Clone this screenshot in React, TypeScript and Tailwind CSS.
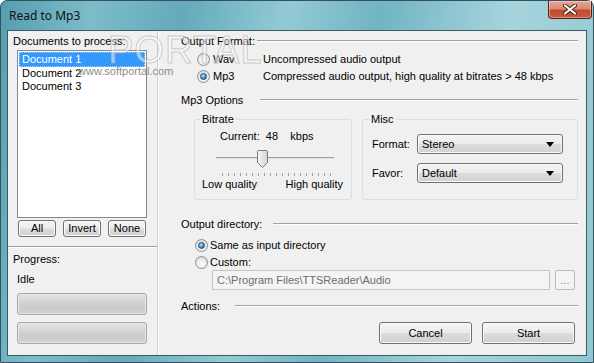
import React from "react";

const btn =
  "flex items-center justify-center rounded-[3px] border border-[#707070] bg-[linear-gradient(#f4f4f4_0%,#ececec_48%,#dcdcdc_52%,#cfcfcf_100%)] shadow-[inset_0_0_0_1px_#fbfbfb] text-[11px] text-black";

const Radio = ({ checked }: { checked?: boolean }) => (
  <span className="flex h-[13px] w-[13px] shrink-0 items-center justify-center rounded-full border border-[#8e8f8f] bg-[radial-gradient(circle_at_50%_65%,#ffffff_0%,#e8e8e8_55%,#cdcdcd_100%)]">
    {checked && (
      <span className="h-[7px] w-[7px] rounded-full border border-[#1d4f7c] bg-[radial-gradient(circle_at_40%_35%,#b8e6ff_0%,#3d8fd0_55%,#15497a_100%)]" />
    )}
  </span>
);

const Header = ({ label, w }: { label: string; w: string }) => (
  <div className="flex h-[14px] items-center">
    <span className={`${w} shrink-0`}>{label}</span>
    <div className="h-[2px] flex-1 border-t border-b border-t-[#a0a0a0] border-b-white" />
  </div>
);

const Select = ({ value }: { value: string }) => (
  <div className="flex h-[20px] w-[146px] items-center justify-between rounded-[3px] border border-[#707070] bg-[linear-gradient(#f4f4f4_0%,#ececec_48%,#dcdcdc_52%,#d2d2d2_100%)] pl-[4px] pr-[8px] shadow-[inset_0_0_0_1px_#fbfbfb]">
    <span>{value}</span>
    <svg width="8" height="5" viewBox="0 0 8 5">
      <path d="M0 0h8L4 5z" fill="#000" />
    </svg>
  </div>
);

const ProgressBar = () => (
  <div className="h-[22px] w-[130px] rounded-[3px] border border-[#a8a8a8] bg-[linear-gradient(#e4e4e4_0%,#d6d6d6_35%,#cacaca_65%,#d2d2d2_100%)] shadow-[inset_0_0_0_1px_#e6e6e6]" />
);

export default function App() {
  const ticks = Array.from({ length: 19 });
  return (
    <div className="relative h-[363px] w-[594px] overflow-hidden font-['Liberation_Sans',sans-serif] text-[11px] text-black">
      <div className="flex h-full w-full flex-col rounded-t-[7px] border border-[#33525c] bg-[linear-gradient(100deg,#559daf_0%,#7dbcc9_14%,#64aabb_28%,#93cad5_44%,#71b4c2_58%,#a6d4dd_78%,#90c6d1_100%)] px-[6px] pb-[6px]">
        {/* title bar */}
        <div className="flex h-[29px] items-center justify-between">
          <span className="pl-[2px] font-['Noto_Sans',sans-serif] text-[12px] text-[#111]">Read to Mp3</span>
          <div className="-mr-[5px] -mt-[11px] flex h-[18px] w-[44px] items-center justify-center rounded-b-[4px] border border-t-0 border-[#5a2018] bg-[linear-gradient(#e7a796_0%,#d88a74_45%,#c14a2e_55%,#c85a3c_100%)] shadow-[inset_0_0_0_1px_rgba(255,255,255,0.35)]">
            <svg width="14" height="11" viewBox="0 0 14 11">
              <path d="M2 1.5l10 8M12 1.5l-10 8" stroke="#4a1d14" strokeWidth="4" strokeLinecap="round" />
              <path d="M2 1.5l10 8M12 1.5l-10 8" stroke="#ffffff" strokeWidth="2.2" strokeLinecap="round" />
            </svg>
          </div>
        </div>

        {/* client */}
        <div className="flex flex-1 border border-[#3d5a63] bg-[#f0f0f0]">
          {/* left panel */}
          <div className="flex w-[150px] shrink-0 flex-col border-r border-r-[#cfcfcf] shadow-[1px_0_0_#ffffff]">
            <div className="px-[5px] pt-[4px] leading-[13px]">Documents to process:</div>
            <div className="ml-[9px] mt-[2px] h-[168px] w-[130px] border border-[#828790] bg-white p-[1px] leading-[13px]">
              <div className="border border-dotted border-[#a8cdf3] bg-[#3399ff] pl-[2px] text-white">Document 1</div>
              <div className="pl-[3px]">Document 2</div>
              <div className="pl-[3px]">Document 3</div>
            </div>
            <div className="ml-[10px] mt-[2px] flex gap-[7px]">
              <div className={`${btn} h-[17px] w-[38px]`}>All</div>
              <div className={`${btn} h-[17px] w-[38px]`}>Invert</div>
              <div className={`${btn} h-[17px] w-[38px]`}>None</div>
            </div>
            <div className="mt-[9px] h-[2px] border-t border-b border-t-[#a0a0a0] border-b-white" />
            <div className="px-[5px] pt-[5px] leading-[13px]">Progress:</div>
            <div className="pl-[9px] pt-[7px] leading-[13px]">Idle</div>
            <div className="ml-[9px] mt-[7px] flex flex-col gap-[7px]">
              <ProgressBar />
              <ProgressBar />
            </div>
          </div>

          {/* right panel */}
          <div className="flex flex-1 flex-col pl-[23px] pr-[8px] pt-[3px]">
            <Header label="Output Format:" w="w-[76px]" />
            <div className="mt-[3px] flex h-[17px] items-center">
              <span className="ml-[16px] mr-[3px]"><Radio /></span>
              <span className="w-[50px]">Wav</span>
              <span>Uncompressed audio output</span>
            </div>
            <div className="flex h-[17px] items-center">
              <span className="ml-[16px] mr-[3px]"><Radio checked /></span>
              <span className="w-[50px]">Mp3</span>
              <span>Compressed audio output, high quality at bitrates &gt; 48 kbps</span>
            </div>
            <div className="mt-[8px]">
              <Header label="Mp3 Options" w="w-[79px]" />
            </div>
            <div className="ml-[13px] mt-[12px] flex gap-[10px]">
              {/* Bitrate */}
              <div className="relative h-[81px] w-[158px] rounded-[3px] border border-[#d5dfe5]">
                <span className="absolute -top-[7px] left-[5px] bg-[#f0f0f0] px-[2px] leading-[13px]">Bitrate</span>
                <div className="ml-[25px] mt-[9px] h-[14px] leading-[14px] whitespace-pre">Current:  48    kbps</div>
                <div className="relative ml-[21px] mt-[7px] h-[20px] w-[118px]">
                  <div className="absolute left-0 right-0 top-[7px] h-[2px] border-t border-b border-t-[#a0a0a0] border-b-[#e3e3e3]" />
                  <svg className="absolute left-[41px] top-0" width="11" height="18" viewBox="0 0 11 18">
                    <defs>
                      <linearGradient id="th" x1="0" x2="1" y1="0" y2="0">
                        <stop offset="0" stopColor="#f6f6f6" />
                        <stop offset="1" stopColor="#d4d4d4" />
                      </linearGradient>
                    </defs>
                    <path d="M1.5 0.5h8a1 1 0 0 1 1 1v11l-5 5-5-5v-11a1 1 0 0 1 1-1z" fill="url(#th)" stroke="#7a7a7a" />
                  </svg>
                </div>
                <div className="ml-[27px] mt-[3px] flex h-[3px] gap-[5px]">
                  {ticks.map((_, i) => (
                    <div key={i} className="h-[3px] w-[1px] bg-[#a0a0a0]" />
                  ))}
                </div>
                <div className="ml-[7px] mr-[8px] mt-[2px] flex justify-between leading-[13px]">
                  <span>Low quality</span>
                  <span>High quality</span>
                </div>
              </div>
              {/* Misc */}
              <div className="relative h-[81px] w-[216px] rounded-[3px] border border-[#d5dfe5]">
                <span className="absolute -top-[7px] left-[6px] bg-[#f0f0f0] px-[2px] leading-[13px]">Misc</span>
                <div className="mt-[14px] flex items-center">
                  <span className="w-[54px] pl-[9px]">Format:</span>
                  <Select value="Stereo" />
                </div>
                <div className="mt-[9px] flex items-center">
                  <span className="w-[54px] pl-[9px]">Favor:</span>
                  <Select value="Default" />
                </div>
              </div>
            </div>
            <div className="mt-[17px]">
              <Header label="Output directory:" w="w-[92px]" />
            </div>
            <div className="mt-[6px] flex h-[17px] items-center">
              <span className="ml-[14px] mr-[2px]"><Radio checked /></span>
              <span>Same as input directory</span>
            </div>
            <div className="flex h-[16px] items-center">
              <span className="ml-[14px] mr-[2px]"><Radio /></span>
              <span>Custom:</span>
            </div>
            <div className="ml-[31px] flex items-center gap-[5px]">
              <div className="flex h-[20px] w-[338px] items-center border border-[#c5c5c5] bg-[#f4f4f4] pl-[4px] text-[#6d6d6d]">
                C:\Program Files\TTSReader\Audio
              </div>
              <div className="flex h-[20px] w-[20px] items-center justify-center rounded-[2px] border border-[#b8bcbf] bg-[#f4f4f4] text-[#8a8a8a]">
                ...
              </div>
            </div>
            <div className="mt-[9px]">
              <Header label="Actions:" w="w-[54px]" />
            </div>
            <div className="mr-[3px] mt-[9px] flex justify-end gap-[10px]">
              <div className={`${btn} h-[22px] w-[93px]`}>Cancel</div>
              <div className={`${btn} h-[22px] w-[93px]`}>Start</div>
            </div>
          </div>
        </div>
      </div>

      {/* watermark */}
      <div className="pointer-events-none absolute left-[108px] top-[31px] font-['Liberation_Sans',sans-serif] text-[38px] font-light leading-[38px] tracking-[1px] text-[rgba(255,255,255,0.5)] [-webkit-text-stroke:1px_rgba(160,160,160,0.5)]">
        PORTAL
      </div>
      <div className="pointer-events-none absolute left-[78px] top-[63px] text-[11px] text-[#8c8c8c]">
        www.softportal.com
      </div>
    </div>
  );
}
